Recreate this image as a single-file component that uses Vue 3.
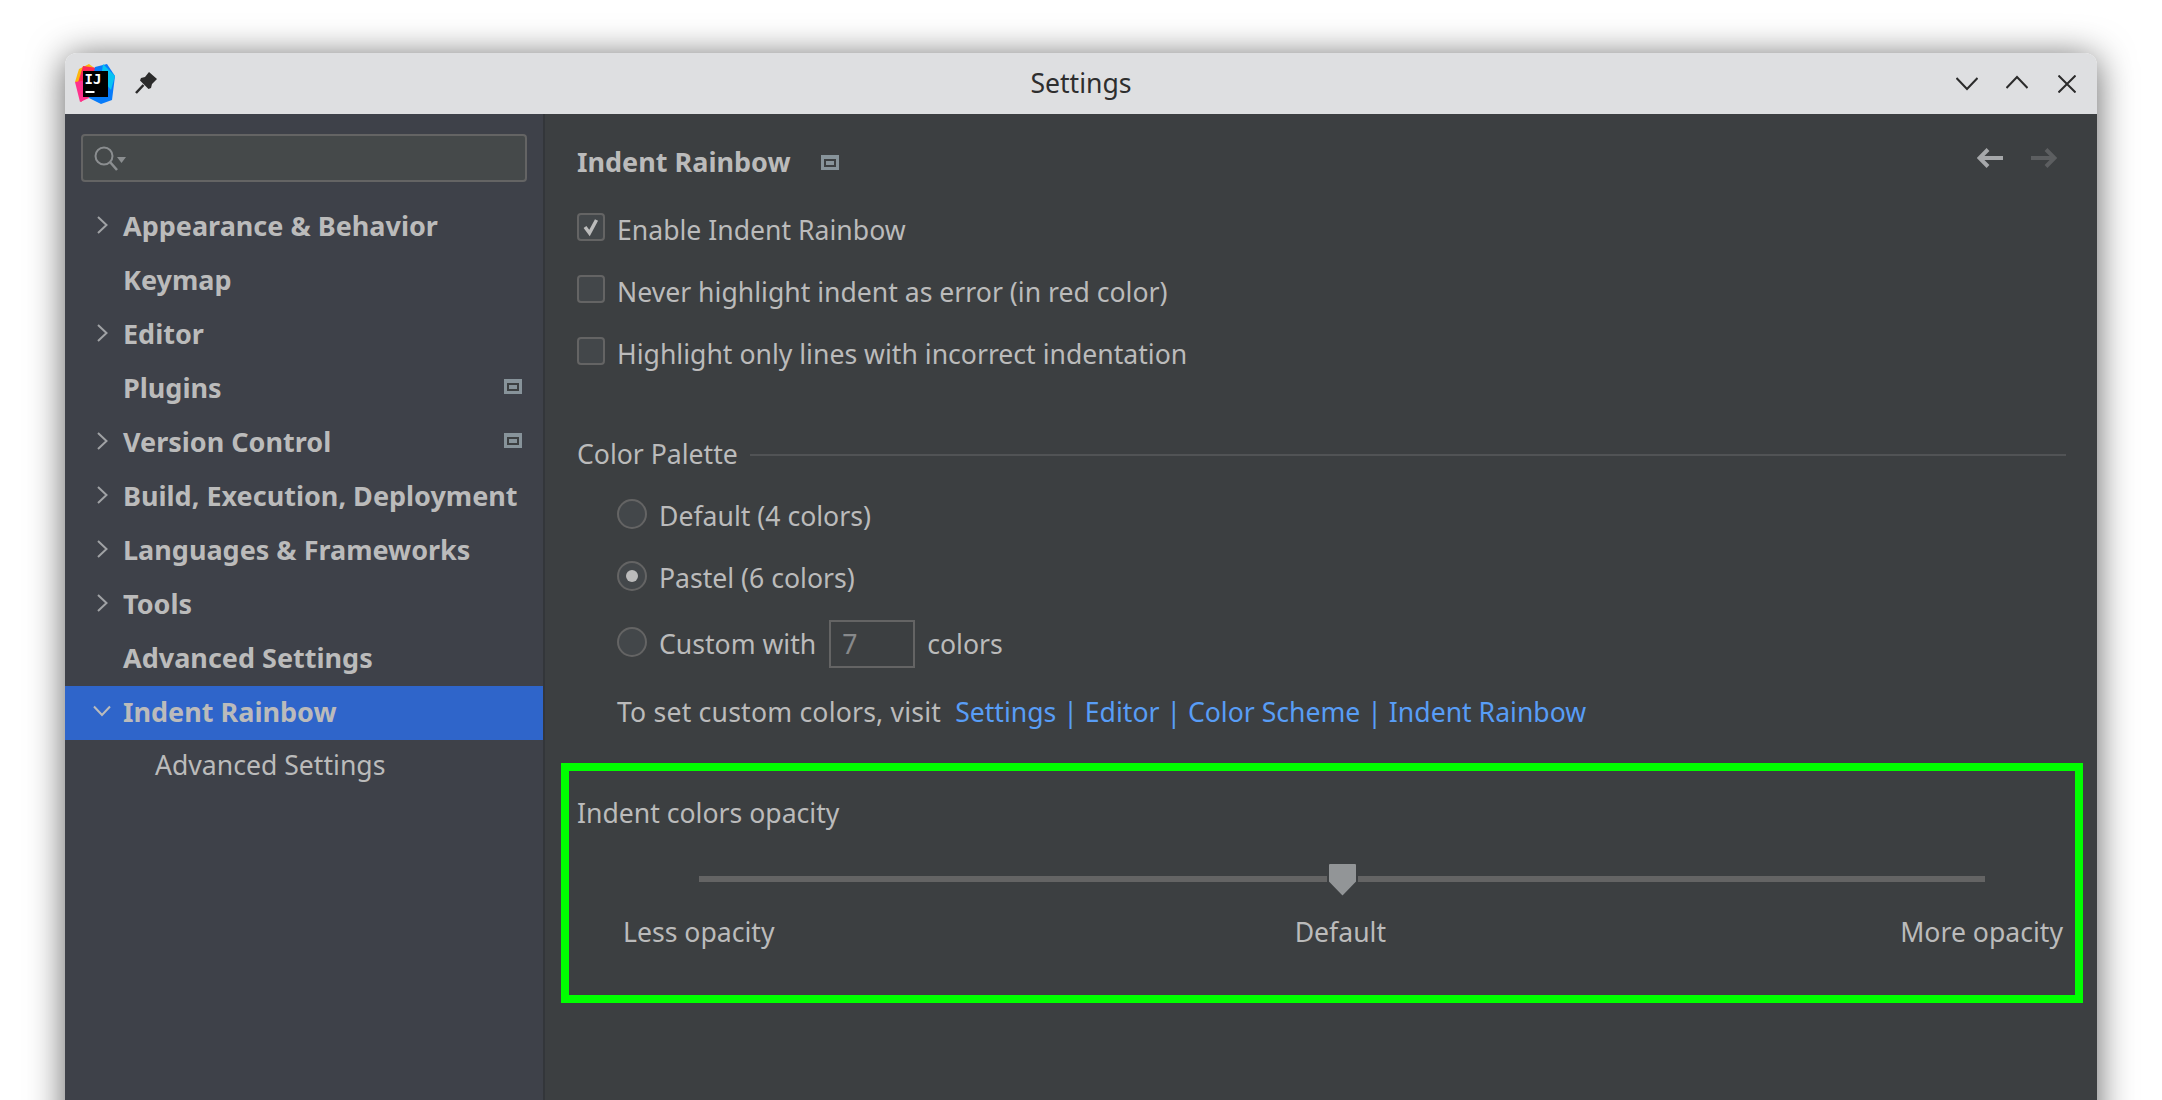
<template>
  <div class="page">
    <div class="window">
      <header class="titlebar">
        <svg class="logo" width="40" height="40" viewBox="0 0 40 40">
          <polygon points="4,5 14,0 22,6 14,20 0,18" fill="#fdb60d" />
          <polygon points="8,2 22,4 24,22 6,38 2,22" fill="#fe2857" />
          <polygon points="0,18 12,16 14,34 5,38" fill="#ff318c" />
          <polygon points="20,3 32,0 40,12 37,36 26,40 14,34" fill="#087cfa" />
          <polygon points="28,0 40,12 36,26 26,14" fill="#07c3f2" />
          <rect x="8" y="7" width="25" height="26" fill="#000" />
          <text x="9.500" y="20" class="logo__text">IJ</text>
          <rect x="10.500" y="27" width="9" height="2" fill="#fff" />
        </svg>
        <svg class="pin" width="22" height="22" viewBox="0 0 22 22">
          <path d="M14 0 L22 7 L17 12 L16 16 L13.500 17 L5 8.500 L6 6 L10 5 Z" fill="#2b2b2b" />
          <path d="M8.500 13 L1 21" stroke="#2b2b2b" stroke-width="2.500" fill="none" />
        </svg>
        <span class="titlebar__title">Settings</span>
        <div class="titlebar__controls">
          <svg width="22" height="14" viewBox="0 0 22 14"><path d="M0.500 1 L11 12 L21.500 1" /></svg>
          <svg width="22" height="14" viewBox="0 0 22 14"><path d="M0.500 13 L11 2 L21.500 13" /></svg>
          <svg width="18" height="18" viewBox="0 0 18 18"><path d="M0.500 0.500 L17.500 17.500 M17.500 0.500 L0.500 17.500" /></svg>
        </div>
      </header>

      <div class="body">
        <aside class="sidebar">
          <div class="search">
            <svg width="33" height="25" viewBox="0 0 33 25">
              <circle cx="10" cy="10" r="8.500" fill="none" stroke="#8b8e90" stroke-width="2" />
              <path d="M16 16 L23 24" stroke="#8b8e90" stroke-width="2.500" fill="none" />
              <path d="M23 11 L32 11 L27.500 17 Z" fill="#8b8e90" />
            </svg>
          </div>
          <ul class="tree">
            <li
              v-for="item in navItems"
              :key="item.label + item.sub"
              class="tree__row"
              :class="{ 'tree__row--active': item.active, 'tree__row--sub': item.sub }"
            >
              <svg v-if="item.arrow === 'right'" class="tree__arrow" width="12" height="18" viewBox="0 0 12 18">
                <path d="M2 1 L10.500 9 L2 17" />
              </svg>
              <svg v-else-if="item.arrow === 'down'" class="tree__arrow tree__arrow--down" width="18" height="12" viewBox="0 0 18 12">
                <path d="M1 1.500 L9 10 L17 1.500" />
              </svg>
              <span class="tree__label">{{ item.label }}</span>
              <i v-if="item.badge" class="project-icon tree__badge"><b /></i>
            </li>
          </ul>
        </aside>

        <main class="content">
          <div class="heading">
            <strong>Indent Rainbow</strong>
            <i class="project-icon"><b /></i>
            <div class="heading__nav">
              <svg width="26" height="20" viewBox="0 0 26 20"><path d="M26 10 L3 10 M11 1.500 L2.500 10 L11 18.500" /></svg>
              <svg class="is-disabled" width="26" height="20" viewBox="0 0 26 20"><path d="M0 10 L23 10 M15 1.500 L23.500 10 L15 18.500" /></svg>
            </div>
          </div>

          <div class="checks">
            <label v-for="opt in checks" :key="opt.label" class="check">
              <span class="check__box">
                <svg v-if="opt.on" width="18" height="20" viewBox="0 0 18 20"><path d="M3 10 L7.500 16 L14.500 3" /></svg>
              </span>
              <span class="check__label">{{ opt.label }}</span>
            </label>
          </div>

          <div class="group-title"><span>Color Palette</span><i /></div>

          <div class="palette">
            <label class="radio"><span class="radio__dot" />Default (4 colors)</label>
            <label class="radio"><span class="radio__dot radio__dot--on" />Pastel (6 colors)</label>
            <label class="radio radio--custom">
              <span class="radio__dot" />Custom with
              <span class="number-field">7</span>
              colors
            </label>
            <p class="visit">
              <span class="visit__lead">To set custom colors, visit</span>
              <a>Settings&nbsp;|&nbsp;Editor&nbsp;|&nbsp;Color Scheme&nbsp;|&nbsp;Indent Rainbow</a>
            </p>
          </div>

          <section class="highlight">
            <div class="highlight__title">Indent colors opacity</div>
            <div class="slider">
              <svg class="slider__thumb" width="33" height="38" viewBox="0 0 33 38">
                <path d="M4 2 H29 Q31 2 31 4 V21 L16.500 36 L2 21 V4 Q2 2 4 2 Z" fill="#929597" stroke="#3c3f41" stroke-width="2" />
              </svg>
            </div>
            <div class="slider-labels">
              <span>Less opacity</span>
              <span class="slider-labels__mid">Default</span>
              <span>More opacity</span>
            </div>
          </section>
        </main>
      </div>
    </div>
  </div>
</template>

<script setup>
const navItems = [
  { label: 'Appearance & Behavior', arrow: 'right' },
  { label: 'Keymap' },
  { label: 'Editor', arrow: 'right' },
  { label: 'Plugins', badge: true },
  { label: 'Version Control', arrow: 'right', badge: true },
  { label: 'Build, Execution, Deployment', arrow: 'right' },
  { label: 'Languages & Frameworks', arrow: 'right' },
  { label: 'Tools', arrow: 'right' },
  { label: 'Advanced Settings' },
  { label: 'Indent Rainbow', arrow: 'down', active: true },
  { label: 'Advanced Settings', sub: true },
];

const checks = [
  { label: 'Enable Indent Rainbow', on: true },
  { label: 'Never highlight indent as error (in red color)', on: false },
  { label: 'Highlight only lines with incorrect indentation', on: false },
];
</script>

<style>
html, body {
  margin: 0;
  background: #fff;
}
</style>

<style scoped>
.page {
  box-sizing: border-box;
  height: 1100px;
  overflow: hidden;
  padding: 53px 65px 0;
  background: #fff;
  font-family: "Noto Sans", sans-serif;
  font-size: 26.6px;
  color: #bbbbbb;
}
.window {
  display: flex;
  flex-direction: column;
  height: 1100px;
  box-shadow: 0 4px 36px rgba(0, 0, 0, 0.62);
  border-radius: 12px 12px 0 0;
}
.titlebar {
  display: flex;
  align-items: center;
  position: relative;
  flex: none;
  height: 61px;
  padding-left: 10px;
  border-radius: 12px 12px 0 0;
  background: #dedfe1;
  color: #2e2e2e;
}
.logo {
  flex: none;
}
.logo__text {
  font-family: "DejaVu Sans Mono", monospace;
  font-size: 14px;
  font-weight: 700;
  fill: #fff;
}
.pin {
  flex: none;
  margin-left: 20px;
  margin-top: -2px;
}
.titlebar__title {
  position: absolute;
  left: 0;
  right: 0;
  top: 10px;
  text-align: center;
  line-height: 40px;
}
.titlebar__controls {
  display: flex;
  align-items: center;
  gap: 28px;
  margin-left: auto;
  padding-right: 21px;
}
.titlebar__controls svg {
  fill: none;
  stroke: #2b2b2b;
  stroke-width: 2;
}
.titlebar__controls svg:nth-child(2) {
  margin-bottom: 3px;
}
.titlebar__controls svg:nth-child(3) {
  margin-left: 2px;
}
.body {
  display: flex;
  flex: 1;
  min-height: 0;
}
.sidebar {
  flex: none;
  box-sizing: border-box;
  width: 480px;
  padding-top: 20px;
  border-right: 2px solid #33363a;
  background: #3e4149;
}
.search {
  display: flex;
  align-items: center;
  box-sizing: border-box;
  height: 48px;
  margin: 0 16px 18px;
  padding-left: 11px;
  border: 2px solid #646464;
  border-radius: 4px;
  background: #45494a;
}
.tree {
  margin: 0;
  padding: 0;
  list-style: none;
  font-weight: 700;
  font-size: 27px;
}
.tree__row {
  display: flex;
  align-items: center;
  position: relative;
  height: 54px;
  padding-left: 58px;
}
.tree__label {
  margin-top: -4px;
}
.tree__row--active {
  background: #2f65ca;
}
.tree__row--sub {
  padding-left: 90px;
  font-weight: 400;
  font-size: 26.6px;
}
.tree__arrow {
  position: absolute;
  left: 31px;
  top: 16px;
  fill: none;
  stroke: #a0a2a5;
  stroke-width: 2;
}
.tree__arrow--down {
  left: 28px;
  top: 19px;
  stroke: #bbbbbb;
}
.project-icon {
  display: flex;
  align-items: center;
  justify-content: center;
  box-sizing: border-box;
  width: 18px;
  height: 15px;
  background: #87939a;
}
.project-icon b {
  display: block;
  box-sizing: border-box;
  width: 12px;
  height: 8px;
  margin-top: 2px;
  border: 2px solid #3c3f41;
  background: #87939a;
}
.tree__badge {
  margin-left: auto;
  margin-right: 21px;
  margin-top: -6px;
}
.content {
  flex: 1;
  min-width: 0;
  padding: 28px 14px 0 32px;
  background: #3c3f41;
}
.heading {
  display: flex;
  align-items: center;
  height: 40px;
  font-size: 27px;
}
.heading strong {
  margin-top: -2px;
  margin-right: 30px;
}
.heading__nav {
  display: flex;
  gap: 28px;
  margin-left: auto;
  margin-right: 26px;
  transform: translateY(-4px);
}
.heading__nav svg {
  fill: none;
  stroke: #a6a8aa;
  stroke-width: 4;
}
.heading__nav .is-disabled {
  stroke: #5c5e60;
}
.checks {
  margin-top: 15px;
}
.check {
  display: flex;
  align-items: center;
  gap: 12px;
  height: 62px;
}
.check__label {
  margin-top: 4px;
}
.check__box {
  display: flex;
  align-items: center;
  justify-content: center;
  flex: none;
  box-sizing: border-box;
  width: 28px;
  height: 28px;
  margin-top: -2px;
  border: 2px solid #646464;
  border-radius: 4px;
  background: #43474a;
}
.check__box svg {
  fill: none;
  stroke: #bbbbbb;
  stroke-width: 3.500;
}
.group-title {
  display: flex;
  align-items: center;
  gap: 12px;
  height: 40px;
  margin-top: 52px;
  margin-right: 17px;
}
.group-title span {
  margin-top: -2px;
}
.group-title i {
  flex: 1;
  height: 2px;
  background: #515355;
}
.palette {
  padding-left: 40px;
  margin-top: 9px;
}
.radio {
  display: flex;
  align-items: center;
  gap: 12px;
  box-sizing: border-box;
  height: 62px;
  padding-top: 2px;
}
.radio--custom {
  margin-top: 4px;
}
.radio__dot {
  display: flex;
  align-items: center;
  justify-content: center;
  flex: none;
  box-sizing: border-box;
  width: 30px;
  height: 30px;
  margin-top: -4px;
  border: 2px solid #646464;
  border-radius: 50%;
  background: #43474a;
}
.radio__dot--on::after {
  content: "";
  width: 12px;
  height: 12px;
  border-radius: 50%;
  background: #bbbbbb;
}
.number-field {
  box-sizing: border-box;
  width: 86px;
  height: 48px;
  margin-left: 1px;
  padding-left: 11px;
  border: 2px solid #646464;
  background: #3c3f41;
  color: #87898b;
  line-height: 44px;
}
.visit {
  display: flex;
  align-items: center;
  gap: 14px;
  height: 60px;
  margin: 8px 0 0;
}
.visit__lead {
  letter-spacing: 0.2px;
}
.visit a {
  color: #589df6;
}
.highlight {
  box-sizing: border-box;
  height: 240px;
  margin: 21px 0 0 -16px;
  padding: 24px 8px 0;
  border: 8px solid #00ff00;
}
.highlight__title {
  height: 40px;
  line-height: 36px;
}
.slider {
  position: relative;
  height: 6px;
  margin: 41px 82px 0 122px;
  background: #646464;
}
.slider__thumb {
  position: absolute;
  left: 627px;
  top: -15px;
}
.slider-labels {
  display: flex;
  justify-content: space-between;
  margin-top: 30px;
  padding: 0 4px 0 46px;
  line-height: 40px;
}
.slider-labels__mid {
  margin-left: 6px;
}
</style>
